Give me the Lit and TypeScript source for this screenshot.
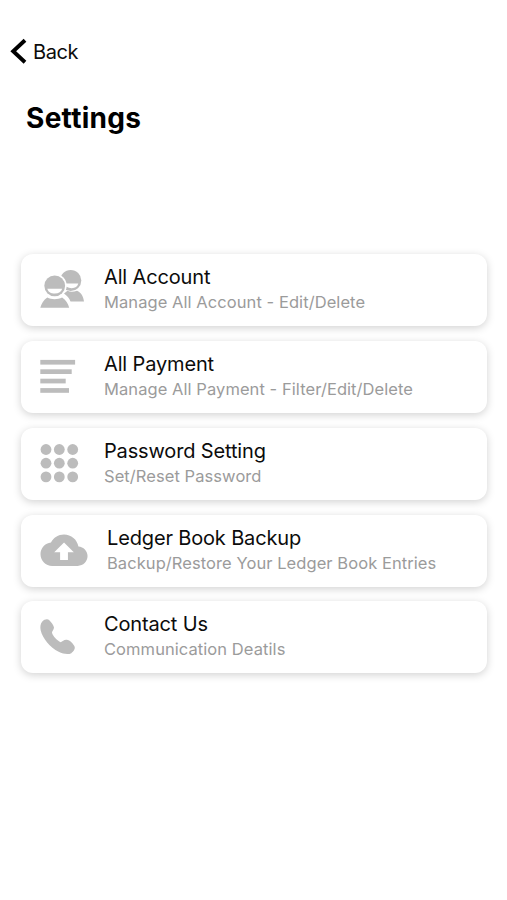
import { LitElement, html, svg, css } from "lit";
import { customElement } from "lit/decorators.js";

const people = svg`
  <circle cx="33.7" cy="26.500" r="10.600"/>
  <path d="M26 29.600h15.300c-.8 2.900-3 4.600-6.600 4.600-3.600 0-7.400-1.900-8.700-4.600z" fill="#fff"/>
  <path d="M27 39.500l3.500-2.700c2.500 1.200 6 1.200 9.500 0 4.200 2.100 6.200 5.100 7 10.600H33.500c-1.300-3.200-3.500-5.700-6.500-7.900z"/>
  <circle cx="17.700" cy="31.800" r="12" fill="#fff"/>
  <circle cx="17.700" cy="31.800" r="10.400"/>
  <path d="M10.300 34.700h14.900c-.8 3.100-3.500 4.900-7.400 4.900s-6.800-1.800-7.500-4.900z" fill="#fff"/>
  <path d="M3.300 53.800c1.200-4.500 3.300-7.700 7-10.300 4 2.300 10.500 2.300 14.800 0 3.700 2.600 6.100 5.800 7.100 10.300z"/>`;

const lines = [34.8, 31.4, 25.4, 28.7].map(
  (w, i) => svg`<rect x="3.300" y=${18.9 + i * 9.4} width=${w} height="4.700"/>`
);

const dots = [21.5, 35.2, 48.9].map((y) =>
  [9, 22.3, 35.7].map((x) => svg`<circle cx=${x} cy=${y} r="5.400"/>`)
);

const cloud = svg`
  <path transform="translate(3.500 11.700) scale(1.960)"
    d="M19.350 10.040C18.670 6.590 15.640 4 12 4 9.110 4 6.600 5.640 5.350 8.040 2.340 8.360 0 10.910 0 14c0 3.310 2.690 6 6 6h13c2.760 0 5-2.240 5-5 0-2.640-2.050-4.780-4.650-4.960zM14 13v4h-4v-4H7l5-5 5 5h-3z"/>`;

const phone = svg`
  <path transform="translate(0 .5) scale(.33333) translate(-81 -22)"
    d="M97 82C103 75 113 73 118 78C124 84 131 93 132 100C132 107 125 111 126 116C129 127 142 140 152 144C158 143 162 136 170 137C180 138 190 149 194 158C196 166 189 173 184 177C175 182 160 180 146 173C120 159 98 133 92 108C90 98 91 89 97 82Z"/>`;

const rows = [
  { icon: people, title: "All Account", note: "Manage All Account - Edit/Delete" },
  { icon: lines, title: "All Payment", note: "Manage All Payment - Filter/Edit/Delete" },
  { icon: dots, title: "Password Setting", note: "Set/Reset Password" },
  { icon: cloud, title: "Ledger Book Backup", note: "Backup/Restore Your Ledger Book Entries", wide: true },
  { icon: phone, title: "Contact Us", note: "Communication Deatils" },
];

@customElement("app-root")
export class AppRoot extends LitElement {
  static styles = css`
    :host {
      display: block;
      box-sizing: border-box;
      height: 900px;
      padding-top: 36px;
      background: #fff;
      color: #0c0c0c;
      font-family: Inter, "Liberation Sans", sans-serif;
    }
    .back {
      display: flex;
      align-items: center;
      gap: 6px;
      height: 32px;
      padding-left: 9px;
      font-size: 20px;
      letter-spacing: -0.45px;
    }
    .chevron {
      width: 18px;
      height: 28px;
      fill: none;
      stroke: #000;
      stroke-width: 3.9;
    }
    h1 {
      margin: 32px 0 0 26px;
      height: 36px;
      line-height: 36px;
      font-size: 28px;
      font-weight: 700;
      letter-spacing: 0.3px;
      color: #000;
    }
    .list {
      display: grid;
      gap: 14.75px;
      padding: 118.3px 20px 0 21px;
    }
    .card {
      display: flex;
      height: 72px;
      padding-left: 16px;
      border-radius: 12px;
      background: #fff;
      box-shadow: 0 2px 9px rgba(0, 0, 0, 0.18);
    }
    .icon {
      flex: none;
      width: 56px;
      height: 72px;
      fill: #bcbcbc;
    }
    .text {
      padding: 10px 0 0 11px;
      white-space: nowrap;
    }
    .wide {
      padding-left: 14px;
    }
    .title {
      font-size: 20px;
      line-height: 26px;
      letter-spacing: -0.15px;
    }
    .note {
      font-size: 16.5px;
      line-height: 25px;
      letter-spacing: 0.07px;
      color: #9b9b9b;
    }
  `;

  render() {
    return html`
      <div class="back">
        <svg class="chevron" viewBox="0 0 18 28"><path d="M16 2.200L4.200 13.200L16 24.200"/></svg>
        <span>Back</span>
      </div>
      <h1>Settings</h1>
      <div class="list">
        ${rows.map(
          (r) => html`<div class="card">
            <svg class="icon" viewBox="0 0 56 72">${r.icon}</svg>
            <div class="text ${r.wide ? "wide" : ""}">
              <div class="title">${r.title}</div>
              <div class="note">${r.note}</div>
            </div>
          </div>`
        )}
      </div>
    `;
  }
}
